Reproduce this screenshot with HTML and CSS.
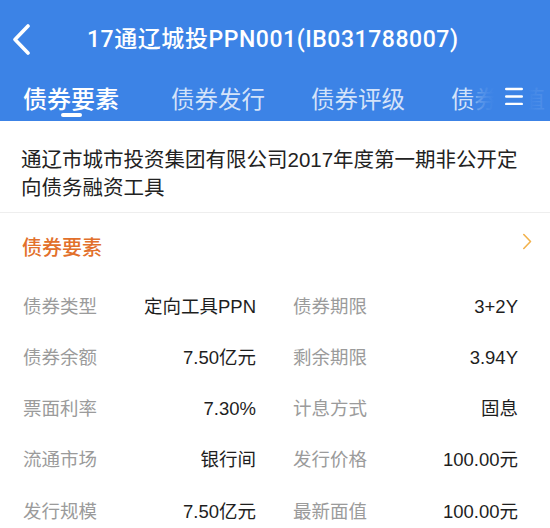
FILE: index.html
```html
<!DOCTYPE html>
<html lang="zh-CN">
<head>
<meta charset="utf-8">
<title>17通辽城投PPN001</title>
<link rel="stylesheet" href="styles.css">
</head>
<body>
<div class="header">
  <div class="nav">
    <svg class="back" width="22" height="32" viewBox="0 0 22 32"><polyline points="16,2 3,15.5 16,29" fill="none" stroke="#fff" stroke-width="3.6" stroke-linecap="round" stroke-linejoin="round"/></svg>
    <div class="title">17通辽城投PPN001(IB031788007)</div>
  </div>
  <div class="tabs">
    <div class="tab active"><span>债券要素</span><i class="bar"></i></div>
    <div class="tab">债券发行</div>
    <div class="tab">债券评级</div>
    <div class="tab">债券估值</div>
    <div class="tab-mask">
      <svg class="menu" width="18" height="18" viewBox="0 0 18 18"><g stroke="#fff" stroke-width="2.4" stroke-linecap="round"><line x1="1.2" y1="2" x2="16.8" y2="2"/><line x1="1.2" y1="9.5" x2="16.8" y2="9.5"/><line x1="1.2" y1="17" x2="16.8" y2="17"/></g></svg>
    </div>
  </div>
</div>
<div class="desc">通辽市城市投资集团有限公司2017年度第一期非公开定向债务融资工具</div>
<div class="section-head">
  <span class="section-title">债券要素</span>
  <svg class="more" width="10" height="17" viewBox="0 0 10 17"><polyline points="1.8,1.5 8.5,8.5 1.8,15.5" fill="none" stroke="#f2b24c" stroke-width="1.6" stroke-linecap="round" stroke-linejoin="round"/></svg>
</div>
<div class="rows">
  <div class="row"><div class="cell"><span class="k">债券类型</span><span class="v">定向工具PPN</span></div><div class="cell"><span class="k">债券期限</span><span class="v">3+2Y</span></div></div>
  <div class="row"><div class="cell"><span class="k">债券余额</span><span class="v">7.50亿元</span></div><div class="cell"><span class="k">剩余期限</span><span class="v">3.94Y</span></div></div>
  <div class="row"><div class="cell"><span class="k">票面利率</span><span class="v">7.30%</span></div><div class="cell"><span class="k">计息方式</span><span class="v">固息</span></div></div>
  <div class="row"><div class="cell"><span class="k">流通市场</span><span class="v">银行间</span></div><div class="cell"><span class="k">发行价格</span><span class="v">100.00元</span></div></div>
  <div class="row"><div class="cell"><span class="k">发行规模</span><span class="v">7.50亿元</span></div><div class="cell"><span class="k">最新面值</span><span class="v">100.00元</span></div></div>
</div>
</body>
</html>
```
FILE: styles.css
```css
html, body {
  margin: 0;
  padding: 0;
  background: #fff;
}
body {
  font-family: "Liberation Sans", "Noto Sans CJK SC", sans-serif;
  color: #222;
  width: 550px;
  overflow: hidden;
}
.header {
  background: #3c83e6;
  height: 121px;
}
.nav {
  height: 80px;
  display: flex;
  align-items: center;
  padding-left: 12px;
}
.back {
  display: block;
  flex-shrink: 0;
}
.title {
  margin-left: 53px;
  color: #fff;
  font-family: "Roboto", "Noto Sans CJK SC", sans-serif;
  font-size: 23px;
  font-weight: 500;
  letter-spacing: 0.55px;
  line-height: 30px;
  white-space: nowrap;
}
.tabs {
  position: relative;
  height: 41px;
  display: flex;
  padding-left: 23px;
  overflow: hidden;
}
.tab {
  flex-shrink: 0;
  font-family: "Noto Sans CJK SC", sans-serif;
  font-size: 23.5px;
  line-height: 24px;
  padding-top: 6px;
  margin-right: 46px;
  color: rgba(255, 255, 255, 0.78);
  white-space: nowrap;
}
.tab.active {
  font-size: 24px;
  font-weight: 500;
  color: #fff;
  margin-right: 52px;
  display: flex;
  flex-direction: column;
  align-items: center;
}
.bar {
  display: block;
  width: 21px;
  height: 4px;
  border-radius: 2px;
  background: #fff;
  margin-top: 3px;
}
.tab-mask {
  position: absolute;
  top: 0;
  bottom: 0;
  left: 472px;
  right: 0;
  background: linear-gradient(to right, rgba(60, 131, 230, 0) 0, rgba(60, 131, 230, 0.7) 6px, rgba(60, 131, 230, 0.9) 14px, #3c83e6 22px, #3c83e6 56px, rgba(60, 131, 230, 0.9) 66px, rgba(60, 131, 230, 0.88) 100%);
}
.menu {
  position: absolute;
  left: 33px;
  top: 7px;
}
.desc {
  padding: 25px 20px 10px 21px;
  font-size: 20.5px;
  line-height: 28px;
  color: #222;
  border-bottom: 1px solid #eeeeee;
}
.section-head {
  display: flex;
  justify-content: space-between;
  align-items: flex-start;
  padding: 20px 18px 0 22px;
}
.section-title {
  font-family: "Noto Sans CJK SC", sans-serif;
  font-size: 20px;
  font-weight: 500;
  line-height: 28px;
  color: #e2702b;
}
.more {
  display: block;
}
.rows {
  margin-top: 18px;
  padding: 0 32px 0 23px;
}
.row {
  display: flex;
  gap: 37px;
  height: 51.25px;
  align-items: center;
  font-size: 18.5px;
}
.cell {
  display: flex;
  justify-content: space-between;
  align-items: baseline;
  white-space: nowrap;
}
.cell:first-child {
  width: 233px;
}
.cell:last-child {
  flex: 1;
}
.k {
  color: #9b9b9b;
}
.v {
  color: #1e1e1e;
}
```
